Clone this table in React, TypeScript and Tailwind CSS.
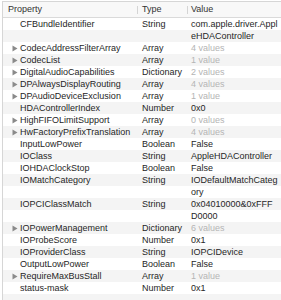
import React from "react";

type Row = {
  name: string;
  type: string;
  value: string[];
  kids?: boolean;
  dim?: boolean;
};

const rows: Row[] = [
  { name: "CFBundleIdentifier", type: "String", value: ["com.apple.driver.Appl", "eHDAController"] },
  { name: "CodecAddressFilterArray", type: "Array", value: ["4 values"], kids: true, dim: true },
  { name: "CodecList", type: "Array", value: ["1 value"], kids: true, dim: true },
  { name: "DigitalAudioCapabilities", type: "Dictionary", value: ["2 values"], kids: true, dim: true },
  { name: "DPAlwaysDisplayRouting", type: "Array", value: ["4 values"], kids: true, dim: true },
  { name: "DPAudioDeviceExclusion", type: "Array", value: ["1 value"], kids: true, dim: true },
  { name: "HDAControllerIndex", type: "Number", value: ["0x0"] },
  { name: "HighFIFOLimitSupport", type: "Array", value: ["0 values"], kids: true, dim: true },
  { name: "HwFactoryPrefixTranslation", type: "Array", value: ["4 values"], kids: true, dim: true },
  { name: "InputLowPower", type: "Boolean", value: ["False"] },
  { name: "IOClass", type: "String", value: ["AppleHDAController"] },
  { name: "IOHDAClockStop", type: "Boolean", value: ["False"] },
  { name: "IOMatchCategory", type: "String", value: ["IODefaultMatchCateg", "ory"] },
  { name: "IOPCIClassMatch", type: "String", value: ["0x04010000&0xFFF", "D0000"] },
  { name: "IOPowerManagement", type: "Dictionary", value: ["6 values"], kids: true, dim: true },
  { name: "IOProbeScore", type: "Number", value: ["0x1"] },
  { name: "IOProviderClass", type: "String", value: ["IOPCIDevice"] },
  { name: "OutputLowPower", type: "Boolean", value: ["False"] },
  { name: "RequireMaxBusStall", type: "Array", value: ["1 value"], kids: true, dim: true },
  { name: "status-mask", type: "Number", value: ["0x1"] },
];

const Triangle = () => (
  <svg width="6" height="7" viewBox="0 0 6 7" className="block">
    <path d="M0.5 0.5 L5.5 3.5 L0.5 6.5 Z" fill="#8a8a8a" />
  </svg>
);

export default function App() {
  return (
    <div className="w-[281px] h-[300px] overflow-hidden bg-white font-['Liberation_Sans',sans-serif] text-[9px] text-[#262626]">
      <div className="ml-[2px] mt-[1px] h-[299px] border-l border-t border-[#d6d6d6] flex flex-col">
        {/* header */}
        <div className="h-[16px] shrink-0 flex items-center bg-[#f8f8f8] border-b border-[#dadada] text-[#333]">
          <div className="w-[134px] pl-[5px]">Property</div>
          <div className="w-[50px] flex items-center">
            <span className="h-[8px] w-px bg-[#d4d4d4]" />
            <span className="pl-[4px]">Type</span>
          </div>
          <div className="flex-1 flex items-center">
            <span className="h-[8px] w-px bg-[#d4d4d4]" />
            <span className="pl-[3px]">Value</span>
          </div>
        </div>

        {/* rows */}
        <div className="flex-1 bg-[image:repeating-linear-gradient(#ffffff_0px,#ffffff_12px,#f4f4f4_12px,#f4f4f4_24px)]">
          {rows.map((r) => (
            <div key={r.name} className="flex leading-[12px]">
              <div className="w-[134px] flex items-start">
                <div className="w-[17px] h-[12px] pl-[9px] flex items-center">
                  {r.kids && <Triangle />}
                </div>
                <span>{r.name}</span>
              </div>
              <div className="w-[50px] pl-[5px]">{r.type}</div>
              <div className={`flex-1 pl-[4px] ${r.dim ? "text-[#b4b4b4]" : ""}`}>
                {r.value.map((v) => (
                  <div key={v}>{v}</div>
                ))}
              </div>
            </div>
          ))}
        </div>
      </div>
    </div>
  );
}
